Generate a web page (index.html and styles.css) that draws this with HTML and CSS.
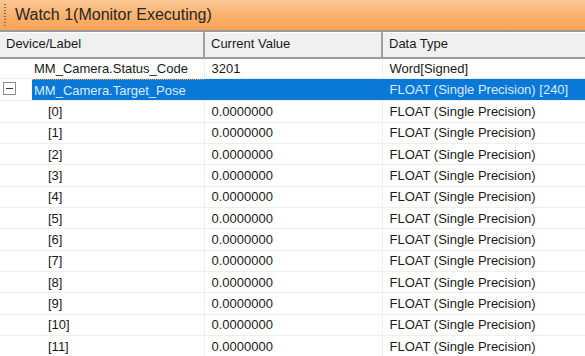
FILE: index.html
```html
<!DOCTYPE html>
<html lang="en">
<head>
    <meta charset="UTF-8">
    <title>Watch 1</title>
    <link rel="stylesheet" href="styles.css">
</head>
<body>

<div class="watch">
    <div class="title-bar">
        <span class="grip"></span>
        <span class="title">Watch 1(Monitor Executing)</span>
    </div>

    <table class="grid">
        <colgroup>
            <col class="col-label">
            <col class="col-value">
            <col class="col-type">
        </colgroup>
        <thead>
            <tr>
                <th>Device/Label</th>
                <th>Current Value</th>
                <th>Data Type</th>
            </tr>
        </thead>
        <tbody>
            <tr>
                <td class="label">MM_Camera.Status_Code</td>
                <td>3201</td>
                <td>Word[Signed]</td>
            </tr>
            <tr class="selected">
                <td class="label"><span class="toggle"></span><span class="sel-text">MM_Camera.Target_Pose</span></td>
                <td class="sel-cell"></td>
                <td class="sel-cell">FLOAT (Single Precision) [240]</td>
            </tr>
            <tr><td class="index">[0]</td><td>0.0000000</td><td>FLOAT (Single Precision)</td></tr>
            <tr><td class="index">[1]</td><td>0.0000000</td><td>FLOAT (Single Precision)</td></tr>
            <tr><td class="index">[2]</td><td>0.0000000</td><td>FLOAT (Single Precision)</td></tr>
            <tr><td class="index">[3]</td><td>0.0000000</td><td>FLOAT (Single Precision)</td></tr>
            <tr><td class="index">[4]</td><td>0.0000000</td><td>FLOAT (Single Precision)</td></tr>
            <tr><td class="index">[5]</td><td>0.0000000</td><td>FLOAT (Single Precision)</td></tr>
            <tr><td class="index">[6]</td><td>0.0000000</td><td>FLOAT (Single Precision)</td></tr>
            <tr><td class="index">[7]</td><td>0.0000000</td><td>FLOAT (Single Precision)</td></tr>
            <tr><td class="index">[8]</td><td>0.0000000</td><td>FLOAT (Single Precision)</td></tr>
            <tr><td class="index">[9]</td><td>0.0000000</td><td>FLOAT (Single Precision)</td></tr>
            <tr><td class="index">[10]</td><td>0.0000000</td><td>FLOAT (Single Precision)</td></tr>
            <tr><td class="index">[11]</td><td>0.0000000</td><td>FLOAT (Single Precision)</td></tr>
        </tbody>
    </table>
</div>

</body>
</html>
```

FILE: styles.css
```css
body {
    margin: 0;
    padding: 0;
    background: #ffffff;
    font-family: "Liberation Sans", Arial, sans-serif;
    font-size: 13px;
    color: #1a1a1a;
    overflow: hidden;
}

.watch {
    width: 585px;
    height: 356px;
}

/* Orange caption strip */
.title-bar {
    height: 32px;
    display: flex;
    align-items: center;
    background: linear-gradient(to bottom, #fdc894 0%, #fbb06c 55%, #f9a457 100%);
    border-bottom: 2px solid #9a9a9a;
    box-sizing: border-box;
}

.grip {
    width: 2px;
    height: 22px;
    margin: 0 9px 0 4px;
    background-image: linear-gradient(to bottom, #6b6b80 50%, transparent 50%);
    background-size: 2px 3px;
}

.title {
    font-size: 16px;
    color: #262626;
}

.grid {
    width: 585px;
    border-collapse: collapse;
    table-layout: fixed;
}

.col-label { width: 204px; }
.col-value { width: 178px; }
.col-type { width: 203px; }

th {
    height: 25px;
    padding: 0 0 2px 6px;
    text-align: left;
    font-weight: normal;
    background: #f0f0f0;
    border-top: 1px solid #ffffff;
    border-bottom: 2px solid #9b9b9b;
    border-right: 2px solid #a0a0a0;
    box-sizing: border-box;
    white-space: nowrap;
}

th:last-child {
    border-right: none;
}

td {
    height: 21.35px;
    padding: 0 0 0 7px;
    border-bottom: 1px solid #eeeeee;
    border-right: 1px solid #eeeeee;
    white-space: nowrap;
    box-sizing: border-box;
}

td:last-child {
    border-right: none;
}

td.label {
    padding-left: 34px;
}

td.index {
    padding-left: 48px;
}

.selected td.label {
    display: flex;
    align-items: stretch;
    height: 21.35px;
    padding: 0;
    border-right: none;
}

/* collapse box drawn as a small square with a bar */
.toggle {
    position: relative;
    width: 13px;
    height: 13px;
    margin: 3px 16px 0 3px;
    border: 1px solid #8c8c8c;
    box-sizing: border-box;
    background: #ffffff;
}

.toggle::after {
    content: "";
    position: absolute;
    left: 2px;
    right: 2px;
    top: 5px;
    height: 1px;
    background: #333333;
}

.sel-text {
    flex: 1;
    display: flex;
    align-items: center;
    padding-left: 2px;
    background: #0a78d6;
    color: #d8ecff;
    border-top: 1px dotted #f0a040;
}

.sel-cell {
    background: #0a78d6;
    color: #d8ecff;
    border-top: 1px dotted #f0a040;
    border-right-color: #0a78d6;
}
```
